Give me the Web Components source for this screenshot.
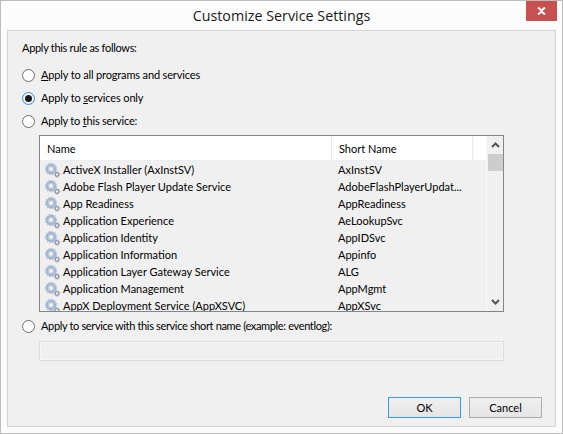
<!DOCTYPE html>
<html><head><meta charset="utf-8"><style>
html,body{margin:0;padding:0;background:#fcfcfc}
body{font:11px Lato,sans-serif;color:#000}
</style></head><body>
<x-dialog title-text="Customize Service Settings">
  <x-text-line style="letter-spacing:-.3px">Apply this rule as follows:</x-text-line>
  <x-radio style="margin-top:13px;letter-spacing:-.15px"><u>A</u>pply to all programs and services</x-radio>
  <x-radio style="margin-top:10px;letter-spacing:-.15px" checked>Apply to <u>s</u>ervices only</x-radio>
  <x-radio style="margin-top:10px;letter-spacing:-.2px">Apply to <u>t</u>his service:</x-radio>
  <x-list style="margin-top:7px">
    <x-row name="ActiveX Installer (AxInstSV)" short="AxInstSV"></x-row>
    <x-row name="Adobe Flash Player Update Service" short="AdobeFlashPlayerUpdat..."></x-row>
    <x-row name="App Readiness" short="AppReadiness"></x-row>
    <x-row name="Application Experience" short="AeLookupSvc"></x-row>
    <x-row name="Application Identity" short="AppIDSvc"></x-row>
    <x-row name="Application Information" short="Appinfo"></x-row>
    <x-row name="Application Layer Gateway Service" short="ALG"></x-row>
    <x-row name="Application Management" short="AppMgmt"></x-row>
    <x-row name="AppX Deployment Service (AppXSVC)" short="AppXSvc"></x-row>
  </x-list>
  <x-radio style="margin-top:8px;letter-spacing:-.35px">Apply to service with this service short name (example: eventlog):</x-radio>
  <x-field></x-field>
  <x-actions><x-btn default>OK</x-btn><x-btn>Cancel</x-btn></x-actions>
</x-dialog>
<script>
function def(name, html, init){
  customElements.define(name, class extends HTMLElement{
    constructor(){super();this.attachShadow({mode:'open'}).innerHTML=html;}
    connectedCallback(){ if(init) init(this); }
  });
}
def('x-dialog',`<style>
:host{display:flex;flex-direction:column;box-sizing:border-box;width:563px;height:434px;border:1px solid #bdbdbd;background:#fcfcfc}
.bar{display:flex;height:29px;flex:none;position:relative;justify-content:center}
.t{font:14.3px "Open Sans",sans-serif;line-height:29px;color:#1a1a1a}
.x{position:absolute;right:5px;top:0;width:31px;height:20px;background:#c75050;display:flex;align-items:center;justify-content:center}
.p{flex:1;margin:0 6px 6px 6px;border:1px solid #d4d4d4;background:#f0f0f0;display:flex;flex-direction:column;padding:9px 0 0 14px;min-height:0}
</style><div class="bar"><span class="t"></span><span class="x"><svg width="9" height="8" viewBox="0 0 9 8"><path d="M1 0.5 4.5 3.5 8 0.5M1 7.5 4.5 4.5 8 7.5" fill="none" stroke="#fff" stroke-width="2"/></svg></span></div><div class="p"><slot></slot></div>`,
 el=>{el.shadowRoot.querySelector('.t').textContent=el.getAttribute('title-text')});
def('x-text-line',`<style>:host{display:block;line-height:16px;height:16px}</style><slot></slot>`);
def('x-radio',`<style>
:host{display:flex;align-items:center;height:13px;line-height:13px;gap:6px}
.c{width:13px;height:13px;box-sizing:border-box;border-radius:50%;border:1px solid #6f6f6f;background:#fff;flex:none;display:flex;align-items:center;justify-content:center}
:host([checked]) .c{border-color:#3a8fe0;box-shadow:inset 0 0 0 1px #dbeaf9}
.d{display:none;width:7px;height:7px;border-radius:50%;background:#1a1a1a}
:host([checked]) .d{display:block}
.l{margin-bottom:2px}
</style><span class="c"><span class="d"></span></span><span class="l"><slot></slot></span>`);
def('x-list',`<style>
:host{display:flex;box-sizing:border-box;width:465px;height:177px;margin-left:17px;border:1px solid #82858c;background:#f0f0f0;flex:none}
.m{width:446px;border-right:1px solid #fafafa;display:flex;flex-direction:column;overflow:hidden;flex:none}
.h{display:flex;height:24px;flex:none;background:#fff;border-bottom:1px solid #e9eef5;line-height:25px}
.h span{box-sizing:border-box;padding-left:7px;border-right:1px solid #e5e9f0}
.n{width:292px}.s{width:141px}
.b{flex:1;overflow:hidden;min-height:0}
.sb{flex:1;display:flex;flex-direction:column;align-items:center;background:#f0f0f0}
.ar{height:18px;width:100%;display:flex;align-items:center;justify-content:center;flex:none}
.th{width:15px;height:17px;background:#cdcdcd;flex:none}
.sp{flex:1}
</style><div class="m"><div class="h"><span class="n">Name</span><span class="s">Short Name</span></div><div class="b"><slot></slot></div></div>
<div class="sb"><div class="ar"><svg width="9" height="6" viewBox="0 0 9 6"><path d="M1 5 4.5 1.5 8 5" fill="none" stroke="#555" stroke-width="2"/></svg></div><div class="th"></div><div class="sp"></div><div class="ar"><svg width="9" height="6" viewBox="0 0 9 6"><path d="M1 1 4.5 4.5 8 1" fill="none" stroke="#555" stroke-width="2"/></svg></div></div>`);
def('x-row',`<style>
:host{display:flex;height:17px;line-height:17px;white-space:nowrap}
.i{width:19px;margin-left:4px;flex:none;display:flex;align-items:center}
.n{width:269px;flex:none}
.s{padding-left:6px}
</style><span class="i"><svg width="17" height="16" viewBox="0 0 17 16"><g fill="none"><circle cx="7" cy="7" r="4.2" stroke="#a4b6cf" stroke-width="2.4" /><circle cx="7" cy="7" r="5.6" stroke="#bcc9da" stroke-width="1.4" stroke-dasharray="1.6 1.3"/><circle cx="7" cy="7" r="2.4" fill="#f4f6f9" stroke="#7f94b0" stroke-width=".6"/><circle cx="13" cy="12.5" r="1.8" stroke="#8a96a5" stroke-width="1.3"/><circle cx="13" cy="12.5" r="3" stroke="#a6b0bc" stroke-width=".9" stroke-dasharray="1.1 1"/></g></svg></span><span class="n"></span><span class="s"></span>`,
 el=>{el.shadowRoot.querySelector('.n').textContent=el.getAttribute('name');el.shadowRoot.querySelector('.s').textContent=el.getAttribute('short')});
def('x-field',`<style>:host{display:block;box-sizing:border-box;width:465px;height:20px;margin:8px 0 0 17px;border:1px solid #dcdcdc;box-shadow:inset 0 0 0 1px #f6f6f6;background:#f0f0f0;flex:none}</style>`);
def('x-actions',`<style>:host{display:flex;justify-content:flex-end;gap:8px;margin-top:auto;padding:0 13px 8px 0}</style><slot></slot>`);
def('x-btn',`<style>
:host{display:flex;align-items:center;justify-content:center;box-sizing:border-box;width:73px;height:21px;border:1px solid #acacac;background:linear-gradient(#f0f0f0,#e5e5e5);line-height:19px}
:host([default]){border-color:#3399ff}
</style><slot></slot>`);
</script></body></html>
